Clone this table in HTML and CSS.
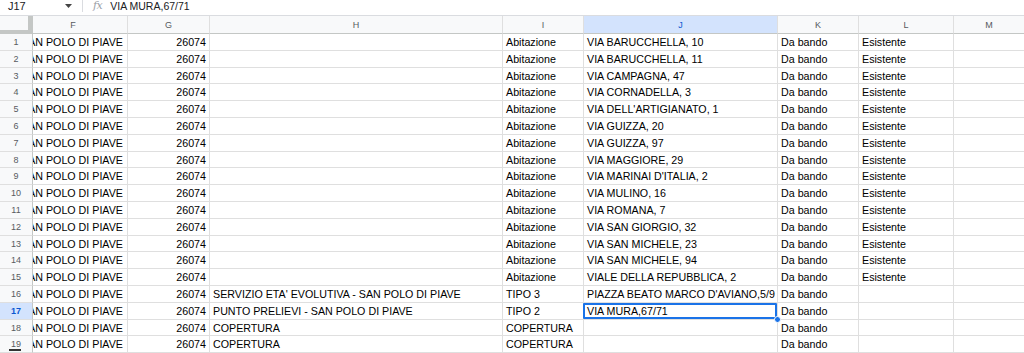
FILE: index.html
```html
<!DOCTYPE html>
<html>
<head>
<meta charset="utf-8">
<link rel="stylesheet" href="styles.css">
</head>
<body>
<div class="fbar">
  <div class="namebox">J17</div>
  <svg class="caret" width="7" height="4" viewBox="0 0 7 4"><path d="M0 0H7L3.5 4Z" fill="#444"/></svg>
  <div class="sep"></div>
  <div class="fx">fx</div>
  <div class="formula">VIA MURA,67/71</div>
</div>
<div class="sheet" id="sheet">
  <div class="corner"></div>
  <div class="ch chf"><span>F</span></div>
  <div class="ch">G</div>
  <div class="ch">H</div>
  <div class="ch">I</div>
  <div class="ch sel">J</div>
  <div class="ch">K</div>
  <div class="ch">L</div>
  <div class="ch last">M</div>
</div>
<script src="app.js"></script>
</body>
</html>
```
FILE: app.js
```js
var addr = ["VIA BARUCCHELLA, 10","VIA BARUCCHELLA, 11","VIA CAMPAGNA, 47","VIA CORNADELLA, 3","VIA DELL'ARTIGIANATO, 1","VIA GUIZZA, 20","VIA GUIZZA, 97","VIA MAGGIORE, 29","VIA MARINAI D'ITALIA, 2","VIA MULINO, 16","VIA ROMANA, 7","VIA SAN GIORGIO, 32","VIA SAN MICHELE, 23","VIA SAN MICHELE, 94","VIALE DELLA REPUBBLICA, 2"];
var rows = [];
addr.forEach(function(a){ rows.push(["", "Abitazione", a, "Da bando", "Esistente"]); });
rows.push(["SERVIZIO ETA' EVOLUTIVA - SAN POLO DI PIAVE", "TIPO 3", "PIAZZA BEATO MARCO D'AVIANO,5/9", "Da bando", ""]);
rows.push(["PUNTO PRELIEVI - SAN POLO DI PIAVE", "TIPO 2", "VIA MURA,67/71", "Da bando", ""]);
rows.push(["COPERTURA", "COPERTURA", "", "Da bando", ""]);
rows.push(["COPERTURA", "COPERTURA", "", "Da bando", ""]);
var sheet = document.getElementById("sheet");
function cell(cls, text) {
  var d = document.createElement("div");
  d.className = cls;
  if (text) { var s = document.createElement("span"); s.textContent = text; d.appendChild(s); }
  sheet.appendChild(d);
  return d;
}
rows.forEach(function(r, i) {
  var n = i + 1;
  var rh = cell("rh" + (n === 17 ? " rsel" : ""), String(n));
  if (n === 19) { var b = document.createElement("i"); b.className = "bar"; rh.appendChild(b); }
  cell("c cf", "SAN POLO DI PIAVE");
  cell("c num", "26074");
  cell("c", r[0]);
  cell("c", r[1]);
  var j = cell("c" + (n === 17 ? " active" : ""), r[2]);
  if (n === 17) { var h = document.createElement("i"); h.className = "handle"; j.appendChild(h); }
  cell("c", r[3]);
  cell("c", r[4]);
  cell("c last", "");
});
```
FILE: styles.css
```css
html, body {
  margin: 0;
  padding: 0;
  background: #fff;
  overflow: hidden;
}
body {
  width: 1024px;
  height: 353px;
  font-family: "Liberation Sans", Arial, sans-serif;
  color: #000;
}
.fbar {
  height: 15px;
  border-bottom: 1px solid #dadce0;
  display: flex;
  align-items: flex-start;
  font-size: 11px;
  color: #202124;
  overflow: hidden;
}
.namebox {
  width: 56px;
  padding-left: 8px;
  line-height: 12px;
}
.caret {
  margin-top: 4px;
  margin-left: 1px;
}
.sep {
  width: 1px;
  height: 12px;
  background: #dadce0;
  margin-left: 10px;
}
.fx {
  margin-left: 10px;
  font-family: "DejaVu Serif", serif;
  font-style: italic;
  color: #9aa0a6;
  font-size: 11px;
  line-height: 12px;
  letter-spacing: -0.5px;
}
.formula {
  margin-left: 8px;
  line-height: 12px;
  font-size: 10.5px;
}
.sheet {
  display: grid;
  grid-template-columns: 33px 95px 82px 293px 81px 194px 81px 95px 1fr;
  grid-template-rows: 18px repeat(19, 16.8px);
}
.sheet > div {
  box-sizing: border-box;
  border-right: 1px solid #dfdfdf;
  border-bottom: 1px solid #dfdfdf;
  overflow: hidden;
  white-space: nowrap;
}
.sheet > .last { border-right: none; }
.corner {
  background: #f8f9fa;
  position: relative;
}
.corner::before {
  content: "";
  position: absolute;
  right: 0;
  top: 0;
  bottom: 0;
  width: 4px;
  background: #c4c7c5;
}
.corner::after {
  content: "";
  position: absolute;
  left: 0;
  right: 0;
  bottom: 0;
  height: 4px;
  background: #c4c7c5;
}
.sheet > .corner { border-right: 1px solid #c4c7c5; border-bottom: none; }
.ch {
  background: #f8f9fa;
  font-size: 9px;
  color: #575b5f;
  text-align: center;
  line-height: 18px;
}
.sheet > .ch { border-bottom-color: #c4c7c5; }
.chf { padding-right: 14px; }
.ch.sel {
  background: #d3e3fd;
  color: #0b57d0;
}
.rh {
  background: #f8f9fa;
  font-size: 9px;
  color: #575b5f;
  text-align: center;
  line-height: 17px;
  position: relative;
}
.sheet > .rh { border-right-color: #c4c7c5; }
.rh.rsel {
  background: #d3e3fd;
  color: #0b57d0;
  font-weight: bold;
}
.bar {
  position: absolute;
  left: 9px;
  bottom: 1px;
  width: 12px;
  height: 2px;
  background: #333;
}
.c {
  font-size: 10.7px;
  line-height: 17px;
  padding: 0 3px;
  color: #000;
}
.cf { text-indent: -15px; }
.num { text-align: right; }
.active { position: relative; overflow: visible !important; }
.active::after {
  content: "";
  position: absolute;
  left: -1px;
  top: 0;
  right: 0;
  bottom: 0;
  border: 2px solid #1a73e8;
  border-radius: 1px;
}
.handle {
  position: absolute;
  right: -4px;
  bottom: -4px;
  width: 5px;
  height: 5px;
  border-radius: 50%;
  background: #1a73e8;
  border: 1px solid #fff;
  z-index: 2;
}
```
